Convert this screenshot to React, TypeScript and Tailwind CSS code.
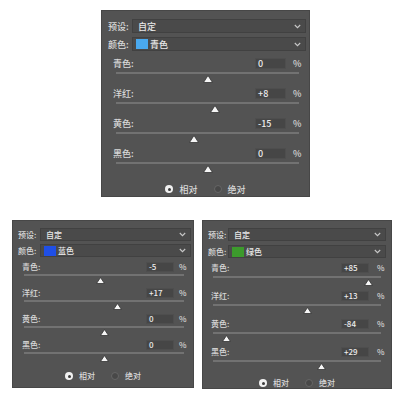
import React from "react";

type Cfg = {
  box: string;
  text: string;
  headLabel: string;
  dd: string;
  ddGap: string;
  groupsTop: string;
  group: string;
  row: string;
  input: string;
  pct: string;
  track: string;
  thumbTop: string;
  thumbW: number;
  thumbH: number;
  radioRow: string;
  swatch: string;
  colorName: string;
  values: number[];
};

const LABELS = ["青色", "洋红", "黄色", "黑色"];

const panels: Cfg[] = [
  {
    box: "w-[209px] h-[187px] pt-[8px] ml-[101px] mt-[10px]",
    text: "text-[9px]",
    headLabel: "w-[30px] pl-[6px]",
    dd: "h-[14px] w-[174px]",
    ddGap: "mt-[4px]",
    groupsTop: "mt-[6px]",
    group: "h-[30px]",
    row: "h-[12px] pl-[11px] pr-[9px]",
    input: "w-[31px] h-[11px] mr-[7px]",
    pct: "w-[7px]",
    track: "mt-[3px] ml-[14px] w-[183px]",
    thumbTop: "top-[3px]",
    thumbW: 10,
    thumbH: 8,
    radioRow: "mt-[6px] h-[12px]",
    swatch: "bg-[#4aa9ee]",
    colorName: "青色",
    values: [0, 8, -15, 0],
  },
  {
    box: "w-[182px] h-[168px] pt-[7px] ml-[12px]",
    text: "text-[8px]",
    headLabel: "w-[27px] pl-[5px]",
    dd: "h-[13px] w-[151px]",
    ddGap: "mt-[3px]",
    groupsTop: "mt-[4px]",
    group: "h-[26px]",
    row: "h-[11px] pl-[9px] pr-[8px]",
    input: "w-[28px] h-[10px] mr-[5px]",
    pct: "w-[6px]",
    track: "mt-[2px] ml-[11px] w-[160px]",
    thumbTop: "top-[3px]",
    thumbW: 9,
    thumbH: 7,
    radioRow: "mt-[6px] h-[10px]",
    swatch: "bg-[#1f4fe6]",
    colorName: "蓝色",
    values: [-5, 17, 0, 0],
  },
  {
    box: "w-[190px] h-[169px] pt-[7px] ml-[8px]",
    text: "text-[8px]",
    headLabel: "w-[25px] pl-[5px]",
    dd: "h-[13px] w-[158px]",
    ddGap: "mt-[4px]",
    groupsTop: "mt-[4px]",
    group: "h-[28px]",
    row: "h-[11px] pl-[8px] pr-[8px]",
    input: "w-[28px] h-[10px] mr-[8px]",
    pct: "w-[6px]",
    track: "mt-[3px] ml-[10px] w-[168px]",
    thumbTop: "top-[3px]",
    thumbW: 9,
    thumbH: 7,
    radioRow: "mt-[4px] h-[10px]",
    swatch: "bg-[#3c9a2c]",
    colorName: "绿色",
    values: [85, 13, -84, 29],
  },
];

function Chevron() {
  return (
    <svg width="7" height="5" viewBox="0 0 7 5" className="mr-[4px] shrink-0">
      <path d="M0.8 1 L3.5 3.7 L6.2 1" fill="none" stroke="#c8c8c8" strokeWidth="1.1" />
    </svg>
  );
}

function Dropdown({ cfg, swatch, label }: { cfg: Cfg; swatch?: string; label: string }) {
  return (
    <div className={`${cfg.dd} flex items-center bg-[#4a4a4a] border border-[#414141]`}>
      {swatch && <div className={`${swatch} w-[12px] h-[10px] ml-[3px] mr-[2px] shrink-0`} />}
      <span className={`${swatch ? "" : "pl-[5px]"} flex-1 text-[#e8e8e8]`}>{label}</span>
      <Chevron />
    </div>
  );
}

function Slider({ cfg, label, value }: { cfg: Cfg; label: string; value: number }) {
  const text = value > 0 ? `+${value}` : `${value}`;
  const pos = ((value + 100) / 200) * 100;
  return (
    <div className={`${cfg.group} flex flex-col`}>
      <div className={`${cfg.row} flex items-center`}>
        <span className="flex-1 text-[#d8d8d8]">{label}:</span>
        <div className={`${cfg.input} flex items-center pl-[2px] bg-[#464646] border border-[#4e4e4e] text-[#ececec]`}>
          {text}
        </div>
        <span className={`${cfg.pct} text-[#d8d8d8]`}>%</span>
      </div>
      <div className={`${cfg.track} h-[2px] bg-[#727272] relative`}>
        <svg
          width={cfg.thumbW}
          height={cfg.thumbH}
          viewBox={`0 0 ${cfg.thumbW} ${cfg.thumbH}`}
          className={`absolute ${cfg.thumbTop}`}
          style={{ left: `calc(${pos}% - ${cfg.thumbW / 2}px)` }}
        >
          <polygon
            points={`${cfg.thumbW / 2},0.5 ${cfg.thumbW - 0.5},${cfg.thumbH - 0.5} 0.5,${cfg.thumbH - 0.5}`}
            fill="#f6f6f6"
            stroke="#333333"
            strokeWidth="0.8"
            strokeLinejoin="round"
          />
        </svg>
      </div>
    </div>
  );
}

function Panel({ cfg }: { cfg: Cfg }) {
  return (
    <div className={`${cfg.box} ${cfg.text} flex flex-col bg-[#535353] border border-[#474747] leading-none font-medium shrink-0`}>
      <div className="flex items-center">
        <span className={`${cfg.headLabel} text-[#d8d8d8]`}>预设:</span>
        <Dropdown cfg={cfg} label="自定" />
      </div>
      <div className={`${cfg.ddGap} flex items-center`}>
        <span className={`${cfg.headLabel} text-[#d8d8d8]`}>颜色:</span>
        <Dropdown cfg={cfg} swatch={cfg.swatch} label={cfg.colorName} />
      </div>
      <div className={`${cfg.groupsTop} flex flex-col`}>
        {LABELS.map((l, i) => (
          <Slider key={l} cfg={cfg} label={l} value={cfg.values[i]} />
        ))}
      </div>
      <div className={`${cfg.radioRow} flex items-center justify-center gap-[6px] text-[#d8d8d8]`}>
        <span className="w-[8px] h-[8px] rounded-full bg-[#f0f0f0] flex items-center justify-center">
          <span className="w-[3px] h-[3px] rounded-full bg-[#3a3a3a]" />
        </span>
        <span className="mr-[10px]">相对</span>
        <span className="w-[8px] h-[8px] rounded-full bg-[#484848] border border-[#666666]" />
        <span>绝对</span>
      </div>
    </div>
  );
}

export default function App() {
  return (
    <div
      className="w-[400px] h-[400px] bg-white flex flex-col overflow-hidden"
      style={{ fontFamily: '"Noto Sans CJK SC", "Noto Sans", sans-serif' }}
    >
      <Panel cfg={panels[0]} />
      <div className="flex mt-[23px]">
        <Panel cfg={panels[1]} />
        <Panel cfg={panels[2]} />
      </div>
    </div>
  );
}
